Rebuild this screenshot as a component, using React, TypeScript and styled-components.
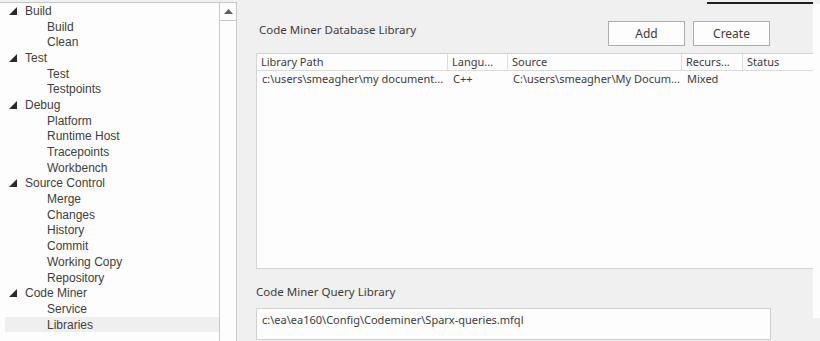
import React from "react";
import styled, { createGlobalStyle } from "styled-components";

const GlobalStyle = createGlobalStyle`
  html, body {
    margin: 0;
    padding: 0;
    background: #f0f0f0;
    overflow: hidden;
  }
`;

const Frame = styled.div`
  display: flex;
  width: 820px;
  height: 341px;
  background: #f0f0f0;
  overflow: hidden;
`;

const TreePanel = styled.div`
  width: 220px;
  flex: none;
  background: #fdfdfd;
  border-top: 1px solid #c8c8c8;
  border-right: 1px solid #c8c8c8;
  margin-top: 2px;
  box-sizing: border-box;
  font-family: "Liberation Sans", Arial, sans-serif;
  font-size: 12px;
  color: #3f3f3f;
`;

const TreeRow = styled.div<{ $child?: boolean; $selected?: boolean }>`
  display: flex;
  align-items: center;
  height: 15.7px;
  margin-left: 5px;
  padding-left: ${(p) => (p.$child ? "42px" : "4px")};
  background: ${(p) => (p.$selected ? "#efefef" : "transparent")};
  white-space: nowrap;
`;

const Caret = styled.svg`
  width: 8px;
  height: 8px;
  margin-right: 8px;
  flex: none;
`;

const ScrollBar = styled.div`
  width: 16px;
  flex: none;
  margin-top: 2px;
  background: #fdfdfd;
  border-top: 1px solid #c8c8c8;
  border-right: 1px solid #c8c8c8;
  display: flex;
  flex-direction: column;
`;

const ScrollButton = styled.div`
  height: 17px;
  border-bottom: 1px solid #c8c8c8;
  display: flex;
  align-items: center;
  justify-content: center;
`;

const Main = styled.div`
  flex: 1;
  display: flex;
  flex-direction: column;
  font-family: "Noto Sans", "Open Sans", sans-serif;
  font-size: 11.5px;
  color: #3c3c3c;
  min-width: 0;
`;

const TopStrip = styled.div`
  height: 4px;
  display: flex;
  justify-content: flex-end;
  padding-right: 7px;
`;

const TopLine = styled.div`
  width: 106px;
  height: 1.5px;
  margin-top: 2px;
  background: #1e1e1e;
`;

const Body = styled.div`
  display: flex;
  flex: 1;
  min-height: 0;
`;

const Content = styled.div`
  flex: 1;
  padding-left: 19px;
  min-width: 0;
`;

const RightEdge = styled.div`
  width: 7px;
  height: 314px;
  flex: none;
  background: #fdfdfd;
`;

const HeaderRow = styled.div`
  display: flex;
  align-items: center;
  height: 25px;
  margin-top: 17px;
  padding-left: 3px;
`;

const Title = styled.div`
  flex: 1;
  margin-top: -8px;
`;

const Button = styled.button`
  width: 77px;
  height: 25px;
  margin-left: 8px;
  background: #fdfdfd;
  border: 1px solid #adadad;
  font-family: inherit;
  font-size: 12px;
  color: #3c3c3c;
  padding: 0;
  &:last-child {
    margin-right: 43px;
  }
`;

const Table = styled.div`
  margin-top: 7px;
  height: 216px;
  background: #fdfdfd;
  border: 1px solid #d4d4d4;
  border-right: none;
  box-sizing: border-box;
  font-size: 11px;
`;

const Columns = "191px 60px 174px 61px 1fr";

const HeadRow = styled.div`
  display: grid;
  grid-template-columns: ${Columns};
  height: 16px;
  border-bottom: 1px solid #dcdcdc;
`;

const HeadCell = styled.div`
  padding-left: 4px;
  line-height: 16px;
  border-right: 1px solid #dcdcdc;
  white-space: nowrap;
  &:last-child {
    border-right: none;
  }
`;

const DataRow = styled.div`
  display: grid;
  grid-template-columns: ${Columns};
  height: 16px;
`;

const DataCell = styled.div`
  padding-left: 5px;
  line-height: 16px;
  white-space: nowrap;
`;

const Lower = styled.div`
  margin-top: 15px;
`;

const QueryInput = styled.div`
  margin-top: 9px;
  width: 515px;
  height: 32px;
  background: #fdfdfd;
  border: 1px solid #d0d0d0;
  box-sizing: border-box;
  padding: 3px 0 0 5px;
  font-size: 11px;
`;

type Node = { label: string; children: string[] };

const tree: Node[] = [
  { label: "Build", children: ["Build", "Clean"] },
  { label: "Test", children: ["Test", "Testpoints"] },
  { label: "Debug", children: ["Platform", "Runtime Host", "Tracepoints", "Workbench"] },
  {
    label: "Source Control",
    children: ["Merge", "Changes", "History", "Commit", "Working Copy", "Repository"],
  },
  { label: "Code Miner", children: ["Service", "Libraries"] },
];

const headers = ["Library Path", "Langu...", "Source", "Recurs...", "Status"];
const row = ["c:\\users\\smeagher\\my document...", "C++", "C:\\users\\smeagher\\My Docum...", "Mixed", ""];

const App: React.FC = () => {
  return (
    <>
      <GlobalStyle />
      <Frame>
        <TreePanel>
          {tree.map((node) => (
            <React.Fragment key={node.label}>
              <TreeRow>
                <Caret viewBox="0 0 8 8">
                  <polygon points="8,0 8,8 0,8" fill="#2b2b2b" />
                </Caret>
                {node.label}
              </TreeRow>
              {node.children.map((child) => (
                <TreeRow key={child} $child $selected={child === "Libraries"}>
                  {child}
                </TreeRow>
              ))}
            </React.Fragment>
          ))}
        </TreePanel>
        <ScrollBar>
          <ScrollButton>
            <svg width="9" height="5" viewBox="0 0 9 5">
              <polygon points="4.5,0 9,5 0,5" fill="#606060" />
            </svg>
          </ScrollButton>
        </ScrollBar>
        <Main>
          <TopStrip>
            <TopLine />
          </TopStrip>
          <Body>
            <Content>
              <HeaderRow>
                <Title>Code Miner Database Library</Title>
                <Button>Add</Button>
                <Button>Create</Button>
              </HeaderRow>
              <Table>
                <HeadRow>
                  {headers.map((h) => (
                    <HeadCell key={h}>{h}</HeadCell>
                  ))}
                </HeadRow>
                <DataRow>
                  {row.map((c, i) => (
                    <DataCell key={i}>{c}</DataCell>
                  ))}
                </DataRow>
              </Table>
              <Lower>
                <div>Code Miner Query Library</div>
                <QueryInput>c:\ea\ea160\Config\Codeminer\Sparx-queries.mfql</QueryInput>
              </Lower>
            </Content>
            <RightEdge />
          </Body>
        </Main>
      </Frame>
    </>
  );
};

export default App;
